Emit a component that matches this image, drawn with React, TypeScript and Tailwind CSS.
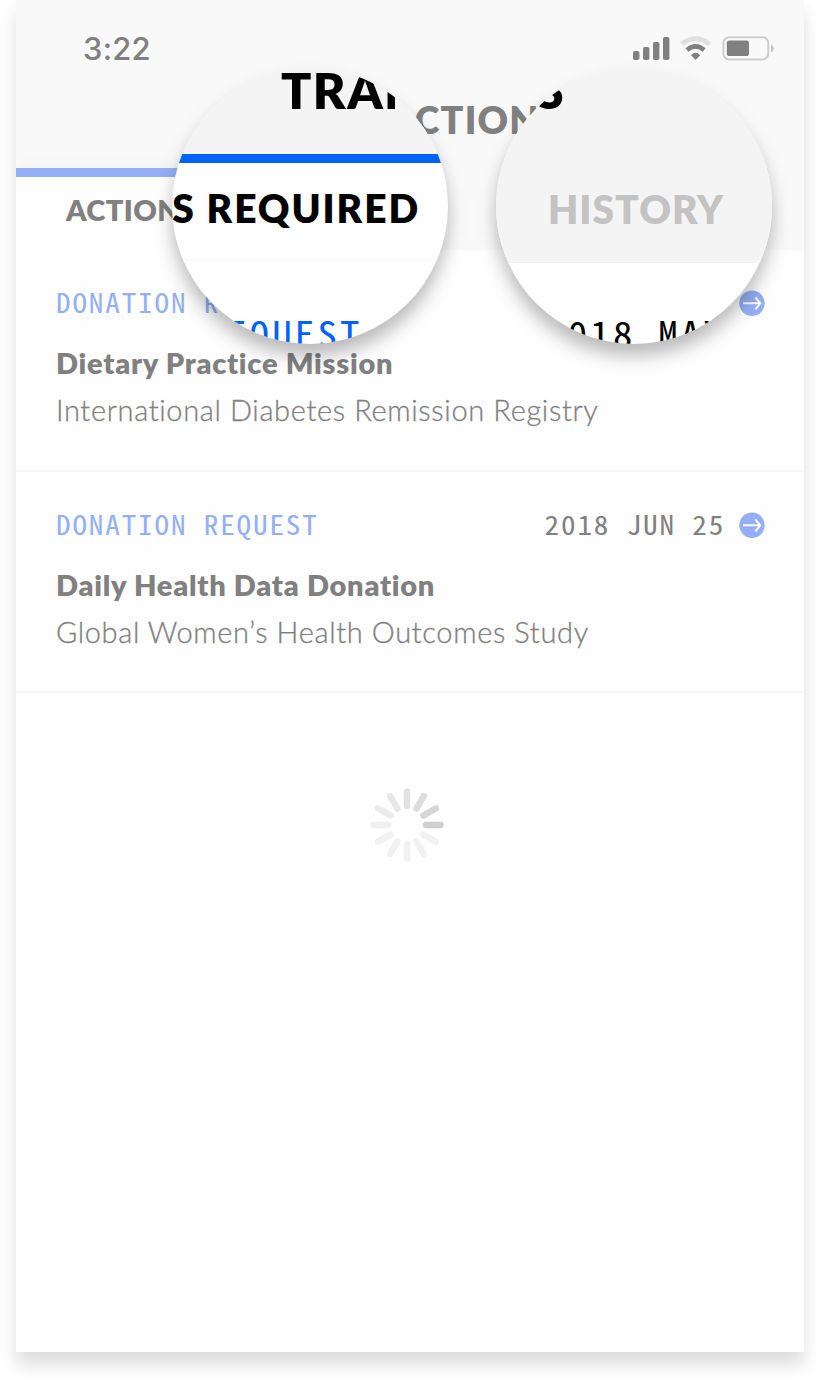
type Entry = { kind: string; date?: string; title: string; study: string };

const entries: Entry[] = [
  {
    kind: "DONATION R",
    title: "Dietary Practice Mission",
    study: "International Diabetes Remission Registry",
  },
  {
    kind: "DONATION REQUEST",
    date: "2018 JUN 25",
    title: "Daily Health Data Donation",
    study: "Global Women’s Health Outcomes Study",
  },
];

const blades = [
  "#cfcfcf", "#d5d5d5", "#dcdcdc", "#e2e2e2", "#e7e7e7", "#ececec",
  "#f0f0f0", "#f1f1f1", "#f1f1f1", "#f1f1f1", "#f1f1f1", "#f1f1f1",
];

function StatusIcons() {
  return (
    <svg width="146" height="28" viewBox="0 0 146 28" fill="none">
      <g fill="#808080">
        <rect x="3" y="17" width="6.4" height="9" rx="1.8" />
        <rect x="13" y="13" width="6.4" height="13" rx="1.8" />
        <rect x="23" y="8" width="6.4" height="18" rx="1.8" />
        <rect x="33" y="3" width="6.4" height="23" rx="1.8" />
      </g>
      <path d="M51.6 10 Q65.5 -0.6 79.6 10" stroke="#e0e0e0" strokeWidth="4.8" />
      <path d="M57 16 Q65.5 8.6 74.2 16" stroke="#808080" strokeWidth="4.6" />
      <path d="M61 21.2 Q65.6 16.4 70.2 21.2 L65.6 26 Z" fill="#808080" />
      <rect x="93.4" y="3.2" width="44.8" height="22.2" rx="5.6" stroke="#cdcdcd" strokeWidth="2" />
      <rect x="96.8" y="6.6" width="22.2" height="15.4" rx="2.6" fill="#808080" />
      <path d="M141 10.2 Q143.8 11.6 143.8 14.3 Q143.8 17 141 18.4 Z" fill="#c4c4c4" />
    </svg>
  );
}

function ArrowBadge() {
  return (
    <svg className="mt-[5px] ml-[14px] shrink-0" width="26" height="26" viewBox="0 0 26 26" fill="none">
      <circle cx="13" cy="13.3" r="12.7" fill="#94aff7" />
      <path d="M4 13.3H21M16.4 7.3L21.2 13.3L16.4 19.3" stroke="#fefefe" strokeWidth="2" />
    </svg>
  );
}

function Spinner() {
  return (
    <svg width="76" height="76" viewBox="-38 -38 76 76">
      {blades.map((color, i) => (
        <line
          key={i}
          x1="19" y1="0" x2="33.5" y2="0"
          stroke={color}
          strokeWidth="6.4"
          strokeLinecap="round"
          transform={`rotate(${-30 * i})`}
        />
      ))}
    </svg>
  );
}

function EntryRow({ entry }: { entry: Entry }) {
  return (
    <li className="flex flex-col border-b-2 border-[#f6f6f6] pt-[35px] pr-[39px] pb-[36px] pl-10 last:pb-[35px]">
      <div className="flex h-10 items-start justify-between font-['Noto_Sans_Mono_CJK_SC',monospace] text-[27px] leading-[34px] tracking-[1.7px] whitespace-nowrap">
        <span className="origin-left scale-x-[1.08] text-[#94aff7]">{entry.kind}</span>
        <div className="flex items-start">
          {entry.date && (
            <span className="origin-right scale-x-[1.08] text-[#808080]">{entry.date}</span>
          )}
          <ArrowBadge />
        </div>
      </div>
      <h2 className="mt-[15px] text-[29px] leading-[46px] font-extrabold tracking-[0.74px] whitespace-nowrap text-[#808080]">
        {entry.title}
      </h2>
      <p className="text-[29px] leading-[48px] font-light tracking-[0.64px] whitespace-nowrap text-[#808080] [-webkit-text-stroke:0.3px_#808080]">
        {entry.study}
      </p>
    </li>
  );
}

const lens =
  "absolute top-[68px] flex h-[276px] w-[276px] flex-col overflow-hidden rounded-full bg-white shadow-[0_12px_18px_rgba(0,0,0,0.27)]";

export default function App() {
  return (
    <main className="relative h-[1384px] w-[820px] overflow-hidden bg-white px-4 font-['Lato','Liberation_Sans',sans-serif]">
      <section className="flex h-[1352px] w-[788px] flex-col bg-[#fefefe] shadow-[0_13px_16px_rgba(0,0,0,0.135)]">
        <header className="flex h-[250px] flex-col bg-[#f9f9f9] pt-[29px]">
          <div className="flex h-10 items-start justify-between pr-7 pl-[67px]">
            <span className="font-['Inter',sans-serif] text-[31px] leading-[40px] font-medium tracking-[0.2px] text-[#808080]">
              3:22
            </span>
            <div className="mt-[5px]">
              <StatusIcons />
            </div>
          </div>
          <h1 className="mt-[27px] h-12 text-center text-[37.5px] leading-[48px] font-extrabold tracking-[1.2px] text-[#808080]">
            TRANSACTIONS
          </h1>
          <nav className="mt-[24px] flex h-[82px]">
            <div className="w-1/2 border-t-[9px] border-[#94aff7] bg-[#fefefe] pl-[50px] text-[29px] leading-[65px] font-extrabold tracking-[0.4px] whitespace-nowrap text-[#808080] shadow-[0_-10px_10px_-4px_rgba(0,0,0,0.02)]">
              ACTION
            </div>
          </nav>
        </header>
        <ul className="flex flex-col">
          {entries.map((entry) => (
            <EntryRow key={entry.title} entry={entry} />
          ))}
        </ul>
        <div className="mt-[94px] flex justify-center pr-[6px]">
          <Spinner />
        </div>
      </section>

      <div className={`${lens} left-[172px]`}>
        <div className="h-[86px] shrink-0 bg-[#f4f4f4] pl-[109px]">
          <div className="-mt-2 w-[117px] overflow-hidden text-[50px] leading-[60px] font-extrabold tracking-[1.4px] whitespace-nowrap text-black">
            TRAN
          </div>
        </div>
        <div className="flex h-[107px] shrink-0 justify-end border-t-[9px] border-b-2 border-t-[#0062fa] border-b-[#fafafa] pt-[12px] pr-[28px] text-[39px] leading-[66px] font-extrabold tracking-[1.9px] whitespace-nowrap text-black">
          S REQUIRED
        </div>
        <div className="mt-[46px] flex w-[191px] shrink-0 justify-end">
          <span className="origin-right scale-x-[1.08] font-['Noto_Sans_Mono_CJK_SC',monospace] text-[36px] leading-[50px] tracking-[2.95px] whitespace-nowrap text-[#0062fa]">
            REQUEST
          </span>
        </div>
      </div>

      <div className={`${lens} left-[496px]`}>
        <div className="h-[195px] shrink-0 border-b border-[#f0f0f0] bg-[#f4f4f4]">
          <div className="-mt-2 flex w-[69px] justify-end text-[50px] leading-[60px] font-extrabold tracking-[1.4px] whitespace-nowrap text-black">
            S
          </div>
          <div className="mt-[56px] pl-[52px] text-[39px] leading-[66px] font-extrabold tracking-[1px] text-[#c3c3c3]">
            HISTORY
          </div>
        </div>
        <div className="mt-[44px] flex shrink-0 pl-[49px]">
          <span className="origin-left scale-x-[1.08] font-['Noto_Sans_Mono_CJK_SC',monospace] text-[36px] leading-[50px] tracking-[2.95px] whitespace-nowrap text-black">
            2018 MAY
          </span>
        </div>
      </div>
    </main>
  );
}
